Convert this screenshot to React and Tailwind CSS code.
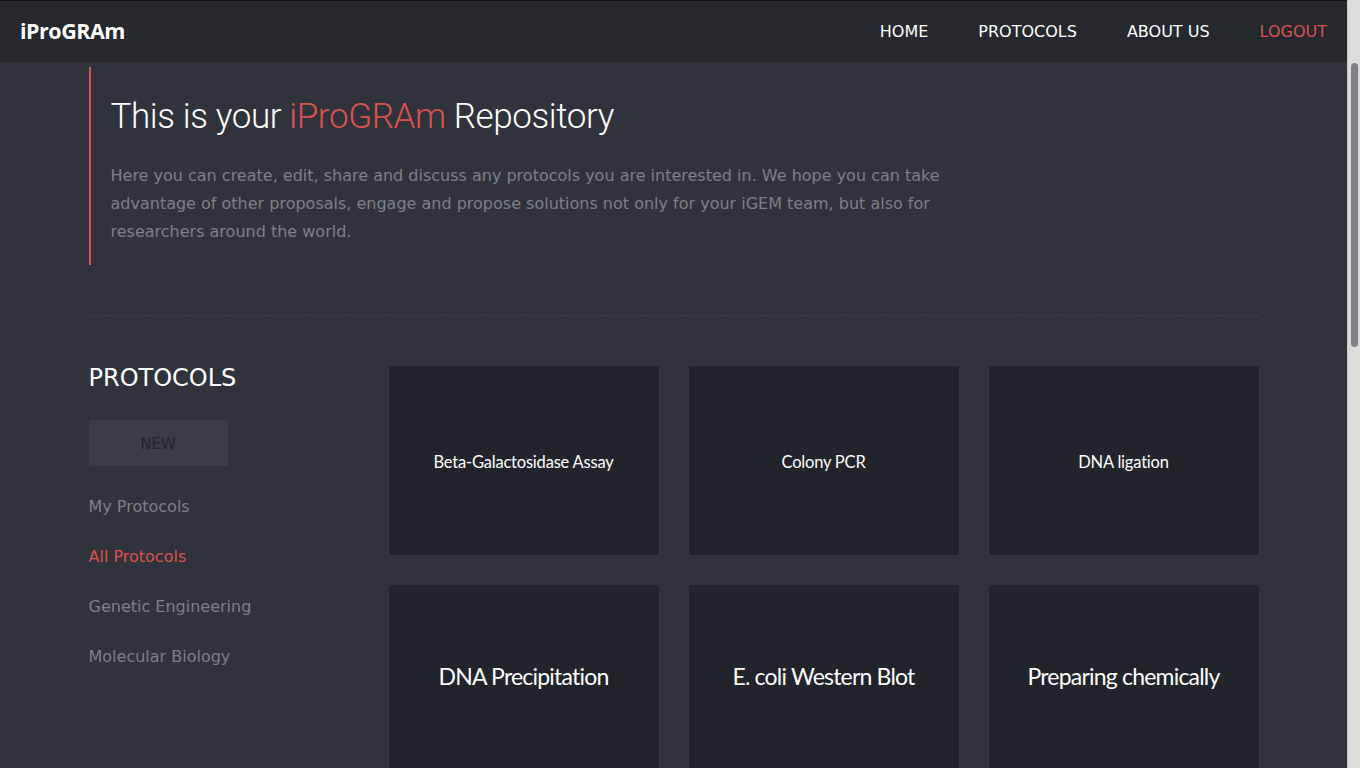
import React from "react";

const navItems = ["HOME", "PROTOCOLS", "ABOUT US"];
const categories = [
  { name: "My Protocols", active: false },
  { name: "All Protocols", active: true },
  { name: "Genetic Engineering", active: false },
  { name: "Molecular Biology", active: false },
];
const protocols = [
  { title: "Beta-Galactosidase Assay", big: false },
  { title: "Colony PCR", big: false },
  { title: "DNA ligation", big: false },
  { title: "DNA Precipitation", big: true },
  { title: "E. coli Western Blot", big: true },
  { title: "Preparing chemically", big: true },
];

export default function App() {
  return (
    <div className="h-screen flex overflow-hidden bg-[#30333b] font-['DejaVu_Sans',sans-serif]">
      <div className="flex-1 flex flex-col overflow-hidden">
        {/* NAVBAR */}
        <nav className="h-[62px] shrink-0 bg-[#25282d] border-t border-[#111214] flex items-center justify-between px-5">
          <span className="text-white text-[21.5px] font-bold font-['Open_Sans',sans-serif] tracking-[-0.5px]">
            iProGRAm
          </span>
          <div className="flex items-center gap-[50px] text-[16px]">
            {navItems.map((n) => (
              <a key={n} className="text-white">
                {n}
              </a>
            ))}
            <a className="text-[#d9534f]">LOGOUT</a>
          </div>
        </nav>

        <div className="w-[1170px] mx-auto pt-[5px]">
          {/* HERO */}
          <div className="border-l-2 border-[#d9534f] pl-5 pt-[28px] h-[198px]">
            <h1 className="text-white text-[35px] font-light font-['Roboto',sans-serif] leading-[44px] tracking-[-0.4px]">
              This is your <span className="text-[#d9534f]">iProGRAm</span> Repository
            </h1>
            <p className="mt-[23px] w-[840px] text-[#7c8089] text-[16px] leading-[28px]">
              Here you can create, edit, share and discuss any protocols you are interested in. We hope you can take
              advantage of other proposals, engage and propose solutions not only for your iGEM team, but also for
              researchers around the world.
            </p>
          </div>

          <div className="mt-[50px] border-t border-dashed border-[#3e424b]" />

          {/* PROTOCOLS */}
          <div className="flex mt-[50px]">
            <div className="w-[300px] shrink-0">
              <h2 className="text-white text-[24px] leading-[24px]">PROTOCOLS</h2>
              <button className="mt-[30px] w-[139px] h-[46px] bg-[#3a3d46] text-[#23252b] text-[15px] leading-[48px]">
                NEW
              </button>
              <div className="mt-[30px] flex flex-col gap-[28px]">
                {categories.map((c) => (
                  <a
                    key={c.name}
                    className={`text-[16px] leading-[22px] ${c.active ? "text-[#d9534f]" : "text-[#7c8089]"}`}
                  >
                    {c.name}
                  </a>
                ))}
              </div>
            </div>

            <div className="flex-1 grid grid-cols-3 gap-[30px]">
              {protocols.map((p) => (
                <div key={p.title} className="h-[189px] bg-[#21242b] flex items-center justify-center">
                  <span
                    className={`text-white font-['Lato',sans-serif] ${
                      p.big
                        ? "text-[23px] tracking-[-0.8px] -mt-[6px]"
                        : "text-[16.5px] tracking-[-0.2px] mt-[3px]"
                    }`}
                  >
                    {p.title}
                  </span>
                </div>
              ))}
            </div>
          </div>
        </div>
      </div>

      {/* SCROLLBAR */}
      <div className="w-[13px] shrink-0 bg-[#dcdcdc] border-l border-[#c8c8c8] pt-[63px] flex justify-center">
        <div className="w-[7px] h-[284px] rounded-full bg-[#7f8283]" />
      </div>
    </div>
  );
}
